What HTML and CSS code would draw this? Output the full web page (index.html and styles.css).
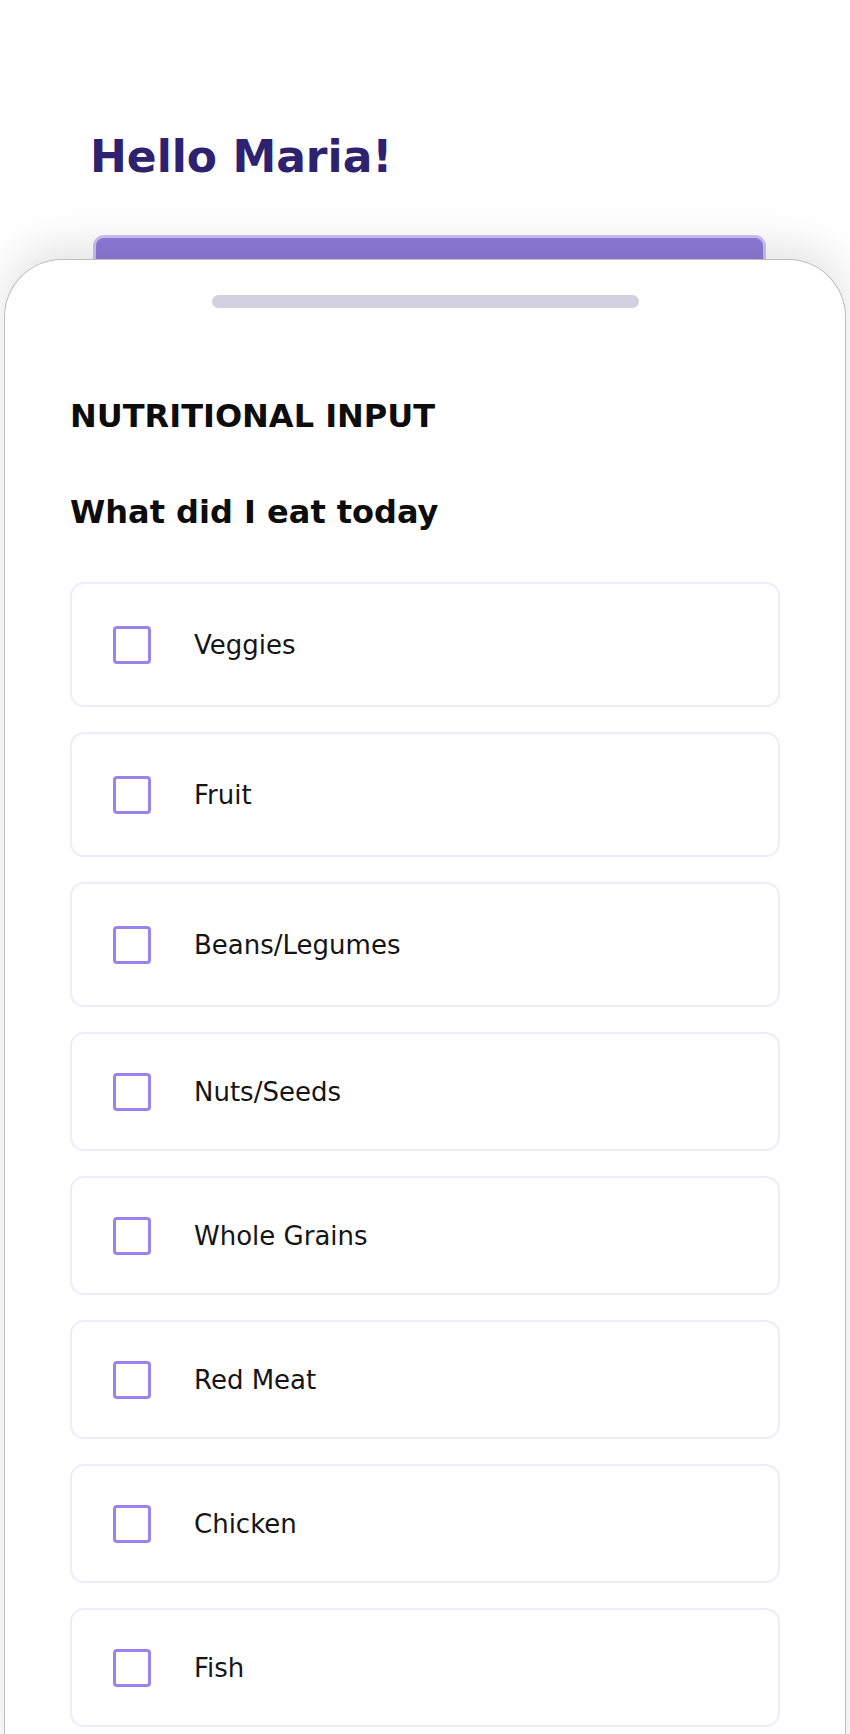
FILE: index.html
```html
<!DOCTYPE html>
<html lang="en">
<head>
    <meta charset="UTF-8">
    <meta name="viewport" content="width=device-width, initial-scale=1.0">
    <title>Nutritional Input</title>
    <link rel="stylesheet" href="styles.css">
</head>
<body>
    <header class="greeting">
        <h1>Hello Maria!</h1>
    </header>
    <div class="tab"></div>
    <main class="sheet">
        <div class="handle"></div>
        <h2 class="section-title">NUTRITIONAL INPUT</h2>
        <h3 class="question">What did I eat today</h3>
        <form class="food-list">
            <label class="food-item tall">
                <input type="checkbox" name="food" value="veggies">
                <span>Veggies</span>
            </label>
            <label class="food-item tall">
                <input type="checkbox" name="food" value="fruit">
                <span>Fruit</span>
            </label>
            <label class="food-item tall">
                <input type="checkbox" name="food" value="beans">
                <span>Beans/Legumes</span>
            </label>
            <label class="food-item">
                <input type="checkbox" name="food" value="nuts">
                <span>Nuts/Seeds</span>
            </label>
            <label class="food-item">
                <input type="checkbox" name="food" value="grains">
                <span>Whole Grains</span>
            </label>
            <label class="food-item">
                <input type="checkbox" name="food" value="red_meat">
                <span>Red Meat</span>
            </label>
            <label class="food-item">
                <input type="checkbox" name="food" value="chicken">
                <span>Chicken</span>
            </label>
            <label class="food-item">
                <input type="checkbox" name="food" value="fish">
                <span>Fish</span>
            </label>
        </form>
    </main>
</body>
</html>
```

FILE: styles.css
```css
body {
    font-family: "DejaVu Sans", "Open Sans", sans-serif;
    margin: 0;
    padding: 0;
    background: #ffffff;
    color: #111111;
}

.greeting {
    padding: 131px 0 0 90px;
}

.greeting h1 {
    margin: 0;
    font-size: 44px;
    line-height: 52px;
    font-weight: bold;
    color: #2e2170;
}

.tab {
    box-sizing: border-box;
    margin: 52px 0 0 93px;
    width: 673px;
    height: 24px;
    background: #8f7bda;
    border: 3px solid #cdc2f3;
    border-bottom: none;
    border-radius: 11px 11px 0 0;
}

.sheet {
    margin: 0 4px;
    padding: 0 65px 40px;
    background: #ffffff;
    border: 1px solid #bdbdbd;
    border-bottom: none;
    border-radius: 58px 58px 0 0;
    box-shadow: 0 -14px 44px rgba(0, 0, 0, 0.11);
    position: relative;
}

.handle {
    width: 427px;
    height: 13px;
    margin: 35px auto 0;
    border-radius: 7px;
    background: #d2cfe1;
}

.section-title, .question {
    margin: 0;
    font-size: 32px;
    line-height: 40px;
    font-weight: bold;
    color: #0d0d0d;
}

.section-title {
    margin-top: 88px;
}

.question {
    margin-top: 56px;
}

.food-list {
    display: flex;
    flex-direction: column;
    gap: 25px;
    margin-top: 50px;
}

.food-item {
    box-sizing: border-box;
    display: flex;
    align-items: center;
    gap: 43px;
    height: 119px;
    padding-left: 41px;
    border: 2px solid #eeebfc;
    border-radius: 14px;
    font-size: 26px;
    color: #151515;
    cursor: pointer;
}

.food-item.tall {
    height: 125px;
}

.food-item input[type="checkbox"] {
    appearance: none;
    -webkit-appearance: none;
    box-sizing: border-box;
    width: 38px;
    height: 38px;
    margin: 0;
    border: 3px solid #9984ee;
    border-radius: 4px;
    background: #ffffff;
    flex-shrink: 0;
}

.food-item input[type="checkbox"]:checked {
    background: #9984ee;
}
```
